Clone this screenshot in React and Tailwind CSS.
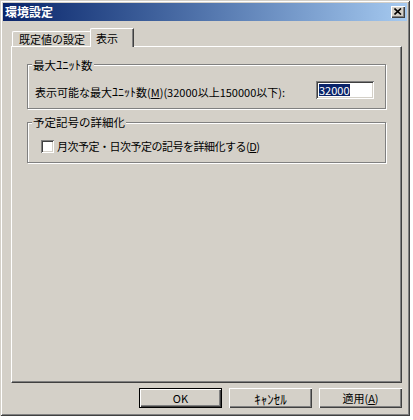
export default function App() {
  return (
    <div className="w-[413px] h-[420px] bg-white font-['Noto_Sans_CJK_JP','Noto_Sans_CJK_SC',sans-serif] text-[11px] text-black leading-none">
      <div className="w-[410px] h-[416px] bg-[#d4d0c8] p-[3px] flex flex-col shadow-[inset_1px_1px_0_#d4d0c8,inset_-1px_-1px_0_#404040,inset_2px_2px_0_#ffffff,inset_-2px_-2px_0_#808080]">
        {/* Title bar */}
        <div className="h-[18px] flex items-center bg-linear-to-r from-[#0a246a] to-[#a6caf0] pl-[2px] pr-[2px]">
          <span className="text-white font-bold text-[12px] leading-[14px]">環境設定</span>
          <div className="ml-auto w-[14px] h-[12px] bg-[#d4d0c8] flex items-center justify-center shadow-[inset_1px_1px_0_#ffffff,inset_-1px_-1px_0_#404040,inset_-2px_-2px_0_#808080]">
            <svg width="8" height="7" viewBox="0 0 8 7" className="-mt-[1px]">
              <path d="M0.5 0.5 L7 6.5 M7 0.5 L0.5 6.5" stroke="#000" strokeWidth="1.6" fill="none" />
            </svg>
          </div>
        </div>

        {/* Body */}
        <div className="flex flex-col pl-[8px] pt-[7px]">
          {/* Tabs */}
          <div className="flex items-end h-[19px] pl-[1px] -mb-[1px]">
            <div className="w-[79px] h-[15px] mb-[1px] border-t border-l border-white rounded-tl-[2px] shadow-[inset_-1px_0_0_#808080] flex items-center justify-center leading-[13px]">
              既定値の設定
            </div>
            <div className="relative z-10 -ml-[1px] w-[44px] h-[19px] bg-[#d4d0c8] border-t border-l border-white border-r border-r-[#404040] rounded-tl-[2px] shadow-[inset_-1px_0_0_#808080] flex items-center pl-[5px] leading-[13px]">
              表示
            </div>
          </div>

          {/* Panel */}
          <div className="w-[391px] h-[337px] border border-white border-r-[#404040] border-b-[#404040] shadow-[inset_-1px_-1px_0_#808080] pt-[17px] pl-[15px]">
            {/* Group 1 */}
            <div className="w-[359px] h-[45px] border border-[#808080] shadow-[inset_1px_1px_0_#ffffff,1px_1px_0_#ffffff]">
              <div className="-mt-[7px] ml-[4px] w-fit px-[1px] bg-[#d4d0c8] h-[13px] leading-[13px] text-[11.5px]">
                最大<span className="text-[12.5px]">ﾕﾆｯﾄ</span>数
              </div>
              <div className="flex items-center mt-[10px] pl-[7px] pr-[11px]">
                <span className="leading-[13px] mt-[3px]">
                  表示可能な最大<span className="text-[12px]">ﾕﾆｯﾄ</span>数(<u>M</u>)(32000以上150000以下):
                </span>
                <div className="ml-auto w-[58px] h-[18px] bg-white pl-[3px] flex items-center shadow-[inset_1px_1px_0_#808080,inset_-1px_-1px_0_#ffffff,inset_2px_2px_0_#404040,inset_-2px_-2px_0_#d4d0c8]">
                  <span className="bg-[#0a246a] text-white leading-[12px]">32000</span>
                </div>
              </div>
            </div>

            {/* Group 2 */}
            <div className="mt-[13px] w-[359px] h-[41px] border border-[#808080] shadow-[inset_1px_1px_0_#ffffff,1px_1px_0_#ffffff]">
              <div className="-mt-[7px] ml-[4px] w-fit px-[1px] bg-[#d4d0c8] h-[13px] leading-[13px] text-[11.5px]">予定記号の詳細化</div>
              <div className="flex items-center mt-[11px] pl-[13px]">
                <div className="w-[13px] h-[13px] bg-white shadow-[inset_1px_1px_0_#808080,inset_-1px_-1px_0_#ffffff,inset_2px_2px_0_#404040,inset_-2px_-2px_0_#d4d0c8]" />
                <span className="ml-[3px] leading-[13px] tracking-[-0.5px]">
                  月次予定・日次予定の記号を詳細化する(<u>D</u>)
                </span>
              </div>
            </div>
          </div>

          {/* Buttons */}
          <div className="w-[391px] flex justify-end gap-[7px] mt-[5px]">
            <div className="w-[83px] h-[20px] border border-black bg-[#d4d0c8] flex items-center justify-center leading-[13px] shadow-[inset_1px_1px_0_#ffffff,inset_-1px_-1px_0_#404040,inset_-2px_-2px_0_#808080]">
              OK
            </div>
            <div className="w-[83px] h-[20px] bg-[#d4d0c8] flex items-center justify-center leading-[13px] text-[13px] shadow-[inset_1px_1px_0_#ffffff,inset_-1px_-1px_0_#404040,inset_-2px_-2px_0_#808080]">
              ｷｬﾝｾﾙ
            </div>
            <div className="w-[83px] h-[20px] bg-[#d4d0c8] flex items-center justify-center leading-[13px] shadow-[inset_1px_1px_0_#ffffff,inset_-1px_-1px_0_#404040,inset_-2px_-2px_0_#808080]">
              適用(<u>A</u>)
            </div>
          </div>
        </div>
      </div>
    </div>
  );
}
